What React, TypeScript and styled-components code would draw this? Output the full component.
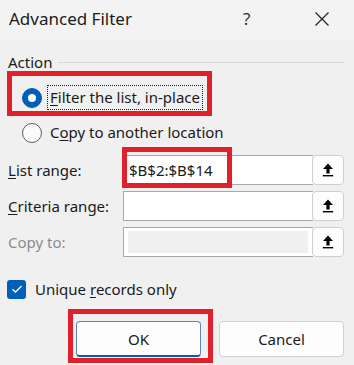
import React from "react";
import styled, { createGlobalStyle } from "styled-components";

const Global = createGlobalStyle`
  html, body { margin: 0; padding: 0; }
  body {
    background: #f0f0f0;
    font-family: "Noto Sans", "Open Sans", sans-serif;
    color: #1a1a1a;
    overflow: hidden;
  }
`;

const Window = styled.div`
  width: 354px;
  height: 365px;
  background: #f0f0f0;
  display: flex;
  flex-direction: column;
  overflow: hidden;
`;

const TitleBar = styled.div`
  height: 40px;
  display: flex;
  align-items: center;
  padding-left: 9px;
  background: #f3f3f3;
  flex-shrink: 0;
`;

const Title = styled.div`
  font-size: 17px;
  color: #1b1b1b;
  flex: 1;
  margin-top: -3px;
`;

const HelpGlyph = styled.div`
  font-size: 17px;
  color: #333;
  width: 14px;
  margin-right: 57px;
  margin-top: -3px;
`;

const CloseIcon = styled.svg`
  width: 16px;
  height: 14px;
  margin-right: 24px;
  margin-top: -3px;
`;

const Body = styled.div`
  display: flex;
  flex-direction: column;
  padding: 13px 10px 0 7px;
`;

const GroupHeader = styled.div`
  display: flex;
  align-items: center;
  gap: 6px;
  height: 18px;
  font-size: 15px;
  padding-left: 1px;
`;

const Rule = styled.div`
  flex: 1;
  height: 1px;
  background: #dadada;
`;

const Highlight = styled.div`
  position: relative;
  align-self: flex-start;
  border: 5px solid #e0212b;
  padding: 9px 4px 1px 10px;
`;

const RadioRow = styled.label<{ $indent?: number }>`
  display: flex;
  align-items: center;
  gap: 5px;
  height: 25px;
  font-size: 15px;
  padding-left: ${(p) => p.$indent ?? 0}px;
`;

const Radio = styled.span<{ $checked?: boolean }>`
  width: 20px;
  height: 20px;
  border-radius: 50%;
  box-sizing: border-box;
  flex-shrink: 0;
  display: flex;
  align-items: center;
  justify-content: center;
  background: ${(p) => (p.$checked ? "#005fb8" : "#fafafa")};
  border: 1px solid ${(p) => (p.$checked ? "#005fb8" : "#5c5c5c")};
  &::after {
    content: "";
    display: ${(p) => (p.$checked ? "block" : "none")};
    width: 8px;
    height: 8px;
    border-radius: 50%;
    background: #fff;
  }
`;

const FocusText = styled.span<{ $focused?: boolean }>`
  padding: 1px 2px 2px;
  border: 1px dotted ${(p) => (p.$focused ? "#222" : "transparent")};
  line-height: 20px;
`;

const Key = styled.span`
  text-decoration: underline;
  text-underline-offset: 2px;
  text-decoration-thickness: 1px;
`;

const Fields = styled.div`
  display: grid;
  grid-template-columns: 115px 1fr;
  row-gap: 6px;
  margin-top: 10px;
  padding-left: 1px;
`;

const Label = styled.div<{ $disabled?: boolean }>`
  font-size: 15px;
  display: flex;
  align-items: center;
  height: 30px;
  color: ${(p) => (p.$disabled ? "#8c8c8c" : "#1a1a1a")};
`;

const Field = styled.div`
  position: relative;
  display: flex;
  height: 30px;
`;

const TextBox = styled.div<{ $disabled?: boolean }>`
  flex: 1;
  box-sizing: border-box;
  border: 1px solid #a8a8a8;
  border-right: none;
  background: #fff;
  font-size: 15px;
  display: flex;
  align-items: center;
  padding: ${(p) => (p.$disabled ? "3px 5px 3px 4px" : "0 5px")};
  &::before {
    content: "";
    display: ${(p) => (p.$disabled ? "block" : "none")};
    flex: 1;
    align-self: stretch;
    background: #f0f0f0;
  }
`;

const PickButton = styled.div`
  width: 32px;
  box-sizing: border-box;
  border: 1px solid #cfcfcf;
  border-radius: 4px;
  background: #fdfdfd;
  display: flex;
  align-items: center;
  justify-content: center;
  margin-left: -1px;
`;

const Mark = styled.div`
  position: absolute;
  border: 5px solid #e0212b;
  pointer-events: none;
`;

const CheckRow = styled.label`
  display: flex;
  align-items: center;
  gap: 9px;
  margin-top: 22px;
  height: 20px;
  font-size: 15px;
`;

const CheckBox = styled.span`
  width: 19px;
  height: 19px;
  border-radius: 3px;
  background: #005fb8;
  display: flex;
  align-items: center;
  justify-content: center;
  flex-shrink: 0;
`;

const ButtonRow = styled.div`
  display: flex;
  justify-content: flex-end;
  gap: 18px;
  margin-top: 22px;
`;

const Button = styled.div<{ $primary?: boolean }>`
  position: relative;
  width: 125px;
  height: 36px;
  box-sizing: border-box;
  border-radius: 4px;
  background: #fdfdfd;
  border: 1px solid ${(p) => (p.$primary ? "#5c86b4" : "#d1d1d1")};
  ${(p) => (p.$primary ? "border-bottom: 2px solid #005fb8;" : "")}
  font-size: 15px;
  display: flex;
  align-items: center;
  justify-content: center;
`;

const UpArrow = () => (
  <svg width="12" height="16" viewBox="0 0 12 16">
    <path d="M6 1.5 L11 7 L7.6 7 L7.6 11.5 L4.4 11.5 L4.4 7 L1 7 Z" fill="#000" />
    <rect x="0.8" y="13" width="10.4" height="1.4" fill="#000" />
  </svg>
);

export default function App() {
  return (
    <>
      <Global />
      <Window>
        <TitleBar>
          <Title>Advanced Filter</Title>
          <HelpGlyph>?</HelpGlyph>
          <CloseIcon viewBox="0 0 16 14">
            <path d="M1.5 0.5 L14.5 13.5 M14.5 0.5 L1.5 13.5" stroke="#222" strokeWidth="1.2" />
          </CloseIcon>
        </TitleBar>
        <Body>
          <GroupHeader>
            <span>Action</span>
            <Rule />
          </GroupHeader>
          <Highlight>
            <RadioRow>
              <Radio $checked />
              <FocusText $focused>
                <Key>F</Key>ilter the list, in-place
              </FocusText>
            </RadioRow>
          </Highlight>
          <RadioRow $indent={15} style={{ marginTop: 4 }}>
            <Radio />
            <FocusText>
              C<Key>o</Key>py to another location
            </FocusText>
          </RadioRow>
          <Fields>
            <Label>
              <Key>L</Key>ist range:
            </Label>
            <Field>
              <TextBox>$B$2:$B$14</TextBox>
              <PickButton>
                <UpArrow />
              </PickButton>
              <Mark style={{ left: -1, top: -8, width: 100, height: 31 }} />
            </Field>
            <Label>
              <Key>C</Key>riteria range:
            </Label>
            <Field>
              <TextBox />
              <PickButton>
                <UpArrow />
              </PickButton>
            </Field>
            <Label $disabled>Copy to:</Label>
            <Field>
              <TextBox $disabled />
              <PickButton>
                <UpArrow />
              </PickButton>
            </Field>
          </Fields>
          <CheckRow>
            <CheckBox>
              <svg width="12" height="10" viewBox="0 0 12 10">
                <path d="M1.5 5.2 L4.5 8 L10.5 2" stroke="#fff" strokeWidth="1.3" fill="none" />
              </svg>
            </CheckBox>
            <span>
              Unique <Key>r</Key>ecords only
            </span>
          </CheckRow>
          <ButtonRow>
            <Button $primary>
              OK
              <Mark style={{ left: -9, top: -13, right: -13, bottom: -8 }} />
            </Button>
            <Button>Cancel</Button>
          </ButtonRow>
        </Body>
      </Window>
    </>
  );
}
